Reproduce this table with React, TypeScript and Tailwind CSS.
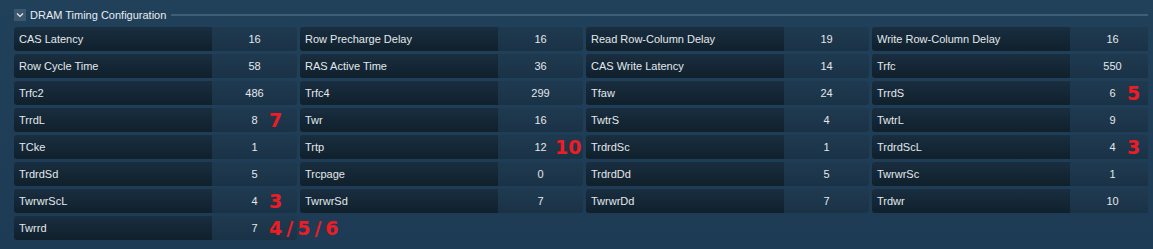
type Cell = { label: string; value: string; mark?: string }

const rows: (Cell | null)[][] = [
  [
    { label: 'CAS Latency', value: '16' },
    { label: 'Row Precharge Delay', value: '16' },
    { label: 'Read Row-Column Delay', value: '19' },
    { label: 'Write Row-Column Delay', value: '16' },
  ],
  [
    { label: 'Row Cycle Time', value: '58' },
    { label: 'RAS Active Time', value: '36' },
    { label: 'CAS Write Latency', value: '14' },
    { label: 'Trfc', value: '550' },
  ],
  [
    { label: 'Trfc2', value: '486' },
    { label: 'Trfc4', value: '299' },
    { label: 'Tfaw', value: '24' },
    { label: 'TrrdS', value: '6', mark: '5' },
  ],
  [
    { label: 'TrrdL', value: '8', mark: '7' },
    { label: 'Twr', value: '16' },
    { label: 'TwtrS', value: '4' },
    { label: 'TwtrL', value: '9' },
  ],
  [
    { label: 'TCke', value: '1' },
    { label: 'Trtp', value: '12', mark: '10' },
    { label: 'TrdrdSc', value: '1' },
    { label: 'TrdrdScL', value: '4', mark: '3' },
  ],
  [
    { label: 'TrdrdSd', value: '5' },
    { label: 'Trcpage', value: '0' },
    { label: 'TrdrdDd', value: '5' },
    { label: 'TwrwrSc', value: '1' },
  ],
  [
    { label: 'TwrwrScL', value: '4', mark: '3' },
    { label: 'TwrwrSd', value: '7' },
    { label: 'TwrwrDd', value: '7' },
    { label: 'Trdwr', value: '10' },
  ],
  [{ label: 'Twrrd', value: '7', mark: '4/5/6' }, null, null, null],
]

function TimingCell({ cell }: { cell: Cell | null }) {
  if (!cell) return <div />
  return (
    <div className="relative flex h-6">
      {/* label side */}
      <div className="flex w-[198px] items-center rounded-l-[3px] bg-gradient-to-b from-[#192e40] to-[#10202c] pl-[5px] text-[#e3e8ec]">
        {cell.label}
      </div>
      {/* value side */}
      <div className="flex flex-1 items-center justify-center rounded-r-[3px] bg-gradient-to-b from-[#1f3a50] to-[#1a3246] text-[#e3e8ec]">
        {cell.value}
      </div>
      {cell.mark && (
        <span
          className={`absolute left-[255px] top-1/2 -translate-y-1/2 font-['DejaVu_Sans',sans-serif] text-[19px] font-bold leading-none text-[#ee1c25] ${
            cell.mark.length > 2 ? 'tracking-[4px]' : ''
          }`}
        >
          {cell.mark}
        </span>
      )}
    </div>
  )
}

export default function App() {
  return (
    <div className="h-[249px] w-[1153px] bg-gradient-to-b from-[#21405a] to-[#1d3b54] font-['Liberation_Sans',Arial,sans-serif] text-[11px]">
      {/* Section header */}
      <div className="flex items-center pl-[14px] pr-[5px] pt-[9px]">
        <div className="flex h-3 w-3 items-center justify-center bg-[#3c576e]">
          <svg width="8" height="6" viewBox="0 0 8 6" fill="none">
            <path d="M1 1.5 L4 4.5 L7 1.5" stroke="#e8eef2" strokeWidth="1.2" />
          </svg>
        </div>
        <span className="ml-[4px] leading-3 text-[#e8edf0]">DRAM Timing Configuration</span>
        <div className="ml-[5px] h-[2px] flex-1 bg-[#3e5d76]" />
      </div>

      {/* Timing grid */}
      <div className="ml-[14px] mt-[6px] w-[1134px] overflow-hidden">
        <div className="grid w-[1141px] grid-cols-4 gap-[3px]">
          {rows.map((row, i) =>
            row.map((cell, j) => <TimingCell key={`${i}-${j}`} cell={cell} />)
          )}
        </div>
      </div>
    </div>
  )
}
